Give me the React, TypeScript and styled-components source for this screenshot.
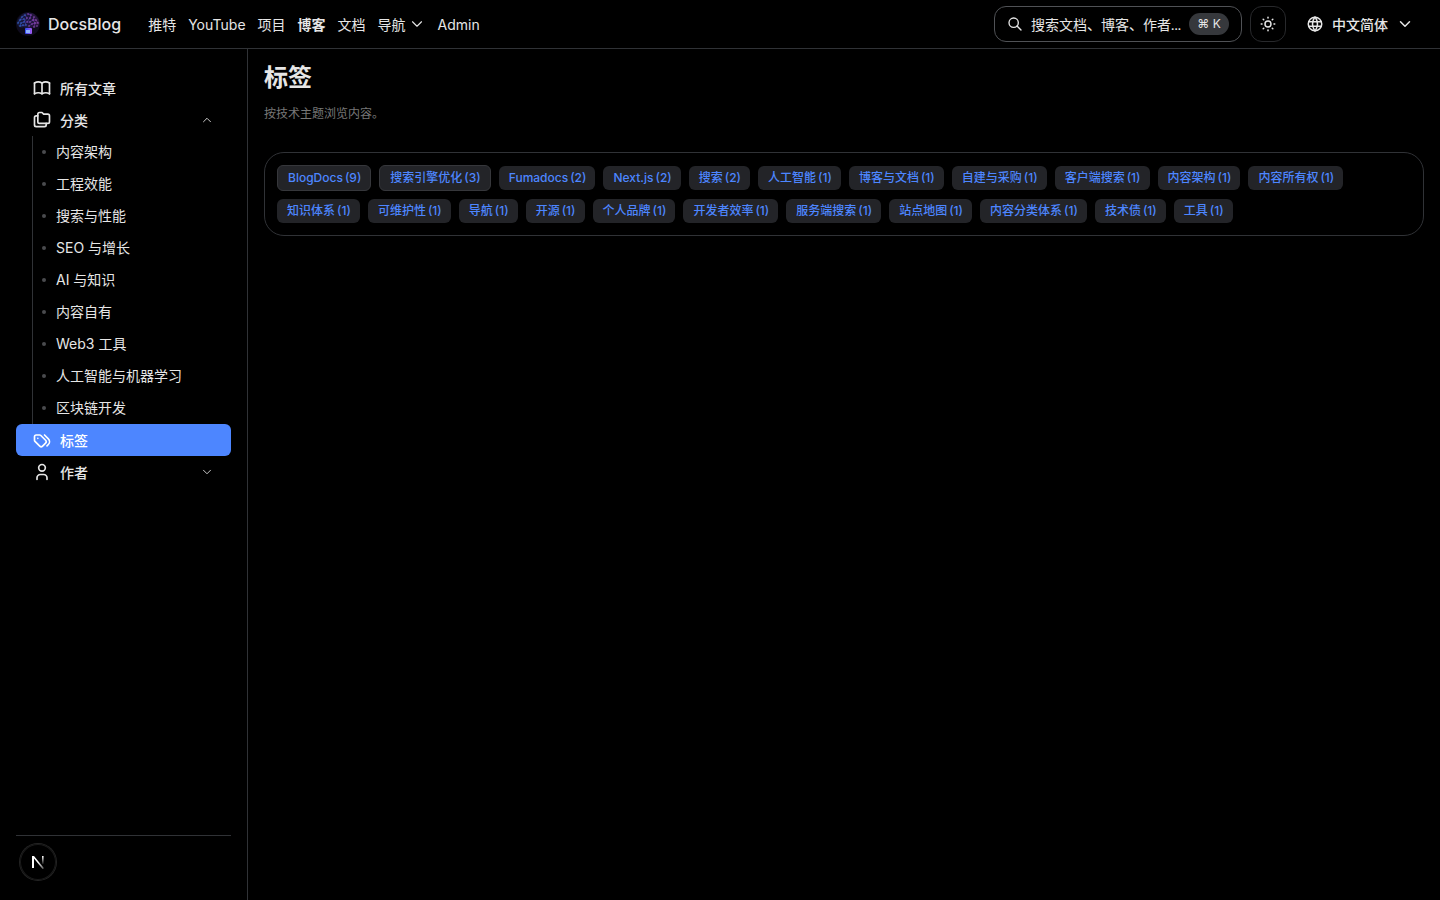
import React from "react";
import styled, { createGlobalStyle } from "styled-components";
import {
  TbBook,
  TbChevronDown,
  TbChevronUp,
  TbFolders,
  TbSearch,
  TbSun,
  TbTags,
  TbUser,
  TbWorld,
} from "react-icons/tb";

const color = {
  bg: "#000000",
  text: "#e6e6e6",
  muted: "#777777",
  line: "#303236",
  chip: "#232428",
  accent: "#4d86ff",
};

const GlobalStyle = createGlobalStyle`
  *, *::before, *::after { box-sizing: border-box; }
  body {
    margin: 0;
    background: ${color.bg};
    color: ${color.text};
    font-family: Inter, "Noto Sans CJK SC", sans-serif;
    font-size: 14px;
    line-height: 20px;
  }
  a { color: inherit; text-decoration: none; }
  button { font: inherit; color: inherit; background: none; border: 0; padding: 0; cursor: pointer; }
  ul { list-style: none; margin: 0; padding: 0; }
  svg { display: block; flex: none; }
`;

const Header = styled.header`
  position: relative;
  display: flex;
  align-items: center;
  justify-content: space-between;
  height: 48px;
  padding: 0 16px;
  box-shadow: 0 1px 0 ${color.line};
`;

const HeaderGroup = styled.div<{ $gap: number }>`
  display: flex;
  align-items: center;
  gap: ${(p) => p.$gap}px;
`;

const Brand = styled.a`
  display: flex;
  align-items: center;
  gap: 8px;
  font-size: 16px;
  font-weight: 500;
`;

const Nav = styled.nav`
  display: flex;
  align-items: center;
  gap: 12px;
`;

const Label = styled.span`
  display: block;
  padding-top: 2px;
`;

const SearchLabel = styled(Label)`
  font-family: Lato, "Noto Sans CJK SC", sans-serif;
`;

const NavLink = styled.a<{ $active?: boolean }>`
  font-weight: ${(p) => (p.$active ? 700 : 400)};
`;

const NavMenu = styled.button`
  display: flex;
  align-items: center;
  gap: 2px;
`;

const SearchButton = styled.button`
  display: flex;
  align-items: center;
  gap: 8px;
  height: 36px;
  padding: 0 12px;
  border: 1px solid #505256;
  border-radius: 12px;
`;

const Kbd = styled.kbd`
  display: flex;
  align-items: center;
  justify-content: center;
  width: 40px;
  height: 22px;
  border-radius: 11px;
  background: #36383c;
  font-family: inherit;
  font-size: 12px;
`;

const IconButton = styled.button`
  display: flex;
  align-items: center;
  justify-content: center;
  width: 36px;
  height: 36px;
  border: 1px solid #28292c;
  border-radius: 12px;
`;

const LanguageButton = styled.button`
  display: flex;
  align-items: center;
  gap: 8px;
  height: 36px;
  padding: 0 10px 0 12px;
  font-weight: 500;
`;

const Body = styled.div`
  display: flex;
  min-height: calc(100vh - 48px);
`;

const Sidebar = styled.aside`
  display: flex;
  flex-direction: column;
  justify-content: space-between;
  flex: none;
  width: 248px;
  padding: 24px 16px 0;
  border-right: 1px solid ${color.line};
`;

const SideItem = styled.a<{ $active?: boolean }>`
  display: flex;
  align-items: center;
  gap: 8px;
  width: 100%;
  height: 32px;
  padding: 0 17px 0 16px;
  border-radius: 6px;
  font-weight: 500;
  color: ${(p) => (p.$active ? "#ffffff" : "inherit")};
  background: ${(p) => (p.$active ? color.accent : "none")};
`;

const Caret = styled.span`
  display: flex;
  margin-left: auto;
`;

const SubList = styled.ul`
  margin-left: 16px;
  border-left: 1px solid ${color.line};
`;

const SubLink = styled.a`
  display: flex;
  align-items: center;
  gap: 10px;
  height: 32px;
  padding-left: 9px;

  &::before {
    content: "";
    width: 4px;
    height: 4px;
    border-radius: 50%;
    background: #4a4b4e;
  }
`;

const SideFooter = styled.div`
  height: 65px;
  border-top: 1px solid ${color.line};
`;

const DevBadge = styled.button`
  position: fixed;
  left: 20px;
  bottom: 20px;
  display: flex;
  align-items: center;
  justify-content: center;
  width: 36px;
  height: 36px;
  border-radius: 50%;
  background: #000000;
  box-shadow: 0 0 0 1px #242424, inset 0 0 0 1px #1a1a1a;
`;

const Main = styled.main`
  flex: 1;
  min-width: 0;
  padding: 12px 16px;
`;

const Title = styled.h1`
  margin: 0;
  font-size: 24px;
  line-height: 36px;
  font-weight: 600;
`;

const Subtitle = styled.p`
  margin: 8px 0 28px;
  font-size: 12px;
  color: ${color.muted};
`;

const TagPanel = styled.ul`
  display: flex;
  flex-wrap: wrap;
  align-items: center;
  gap: 8px;
  padding: 12px;
  border: 1px solid ${color.line};
  border-radius: 20px;
`;

const Tag = styled.a<{ $outlined: boolean }>`
  display: flex;
  align-items: center;
  gap: 2px;
  padding: 2px 9px 2px 10px;
  border: ${(p) => (p.$outlined ? "1px solid #36373b" : "0")};
  border-radius: 6px;
  background: ${color.chip};
  color: ${color.accent};
  font-size: 12px;
  font-weight: 500;
`;

const Dots = [
  [4, 8], [6, 5], [9, 3], [12, 2], [15, 3], [18, 5], [20, 8], [22, 11], [2, 11], [5, 11],
  [8, 7], [11, 6], [14, 6], [17, 8], [19, 11], [8, 10], [11, 10], [14, 10], [16, 12], [4, 14],
  [7, 13], [10, 13], [13, 14], [18, 15], [21, 14],
];

const LogoMark = () => (
  <svg width="24" height="24" viewBox="0 0 24 24" aria-hidden="true">
    <defs>
      <linearGradient id="brain" x1="0" x2="1">
        <stop offset="0" stopColor="#2f5fd0" />
        <stop offset="0.5" stopColor="#5a3fc0" />
        <stop offset="1" stopColor="#a044c0" />
      </linearGradient>
      <linearGradient id="chip" x1="0" x2="1">
        <stop offset="0" stopColor="#2f4cf5" />
        <stop offset="1" stopColor="#a45cf0" />
      </linearGradient>
    </defs>
    <circle cx="12" cy="12" r="12" fill="#0e0b1c" />
    <path
      d="M1 12Q1 7 5 4Q8 0 12 1Q17 0 20 4Q24 8 23 13Q20 17 16 15L14 17H10L8 15Q3 17 1 12Z"
      fill="url(#brain)"
      opacity="0.2"
    />
    <path
      d="M2 11L6 5L9 3L11 6L8 10L5 11L4 14L10 13L8 7L4 8M12 2L15 3L14 6L11 10L14 10L17 8L20 8L22 11L19 11L16 12L13 14M18 5L17 8L19 11L18 15"
      fill="none"
      stroke="url(#brain)"
      strokeWidth="0.5"
    />
    {Dots.map(([x, y]) => (
      <circle key={`${x}-${y}`} cx={x} cy={y} r="0.7" fill={x < 11 ? "#3c72e0" : "#a558d0"} />
    ))}
    <rect x="9" y="16" width="7" height="6" rx="1" fill="url(#chip)" />
    <rect x="10" y="18" width="4" height="3" fill="#8fb4ff" />
  </svg>
);

const NextMark = () => (
  <svg width="14" height="14" viewBox="0 0 14 14" aria-hidden="true">
    <defs>
      <linearGradient id="stem" x1="0" y1="0" x2="0" y2="1">
        <stop offset="0" stopColor="#fff" />
        <stop offset="1" stopColor="#fff" stopOpacity="0.1" />
      </linearGradient>
      <linearGradient id="slash" x1="0.5" y1="0.5" x2="1" y2="1">
        <stop offset="0" stopColor="#fff" />
        <stop offset="1" stopColor="#fff" stopOpacity="0.3" />
      </linearGradient>
    </defs>
    <rect x="1" y="1" width="2" height="12" fill="#fff" />
    <path d="M1 1H3L13 13.3L11.6 14Z" fill="url(#slash)" />
    <rect x="11" y="1" width="1.6" height="8" fill="url(#stem)" />
  </svg>
);

const categories = [
  "内容架构",
  "工程效能",
  "搜索与性能",
  "SEO 与增长",
  "AI 与知识",
  "内容自有",
  "Web3 工具",
  "人工智能与机器学习",
  "区块链开发",
];

const tags: [string, number][] = [
  ["BlogDocs", 9],
  ["搜索引擎优化", 3],
  ["Fumadocs", 2],
  ["Next.js", 2],
  ["搜索", 2],
  ["人工智能", 1],
  ["博客与文档", 1],
  ["自建与采购", 1],
  ["客户端搜索", 1],
  ["内容架构", 1],
  ["内容所有权", 1],
  ["知识体系", 1],
  ["可维护性", 1],
  ["导航", 1],
  ["开源", 1],
  ["个人品牌", 1],
  ["开发者效率", 1],
  ["服务端搜索", 1],
  ["站点地图", 1],
  ["内容分类体系", 1],
  ["技术债", 1],
  ["工具", 1],
];

export default function App() {
  return (
    <>
      <GlobalStyle />
      <Header>
        <HeaderGroup $gap={27}>
          <Brand href="#">
            <LogoMark />
            DocsBlog
          </Brand>
          <Nav>
            <NavLink href="#"><Label>推特</Label></NavLink>
            <NavLink href="#"><Label>YouTube</Label></NavLink>
            <NavLink href="#"><Label>项目</Label></NavLink>
            <NavLink href="#" $active><Label>博客</Label></NavLink>
            <NavLink href="#"><Label>文档</Label></NavLink>
            <NavMenu type="button">
              <Label>导航</Label>
              <TbChevronDown size={18} strokeWidth={1.5} />
            </NavMenu>
            <NavLink href="#"><Label>Admin</Label></NavLink>
          </Nav>
        </HeaderGroup>
        <HeaderGroup $gap={8}>
          <SearchButton type="button">
            <TbSearch size={16} />
            <SearchLabel>搜索文档、博客、作者...</SearchLabel>
            <Kbd>⌘ K</Kbd>
          </SearchButton>
          <IconButton type="button" aria-label="切换主题">
            <TbSun size={18} />
          </IconButton>
          <LanguageButton type="button">
            <TbWorld size={18} />
            <Label>中文简体</Label>
            <TbChevronDown size={18} />
          </LanguageButton>
        </HeaderGroup>
      </Header>
      <Body>
        <Sidebar>
          <nav>
            <SideItem href="#">
              <TbBook size={20} />
              <Label>所有文章</Label>
            </SideItem>
            <SideItem as="button" type="button">
              <TbFolders size={20} />
              <Label>分类</Label>
              <Caret>
                <TbChevronUp size={14} strokeWidth={1.5} />
              </Caret>
            </SideItem>
            <SubList>
              {categories.map((name) => (
                <li key={name}>
                  <SubLink href="#">{name}</SubLink>
                </li>
              ))}
            </SubList>
            <SideItem href="#" $active>
              <TbTags size={20} />
              <Label>标签</Label>
            </SideItem>
            <SideItem as="button" type="button">
              <TbUser size={20} />
              <Label>作者</Label>
              <Caret>
                <TbChevronDown size={14} strokeWidth={1.5} />
              </Caret>
            </SideItem>
          </nav>
          <SideFooter />
        </Sidebar>
        <Main>
          <Title>标签</Title>
          <Subtitle>按技术主题浏览内容。</Subtitle>
          <TagPanel>
            {tags.map(([name, count]) => (
              <li key={name}>
                <Tag href="#" $outlined={count > 2}>
                  {name} <span>({count})</span>
                </Tag>
              </li>
            ))}
          </TagPanel>
        </Main>
      </Body>
      <DevBadge type="button" aria-label="Next.js">
        <NextMark />
      </DevBadge>
    </>
  );
}
